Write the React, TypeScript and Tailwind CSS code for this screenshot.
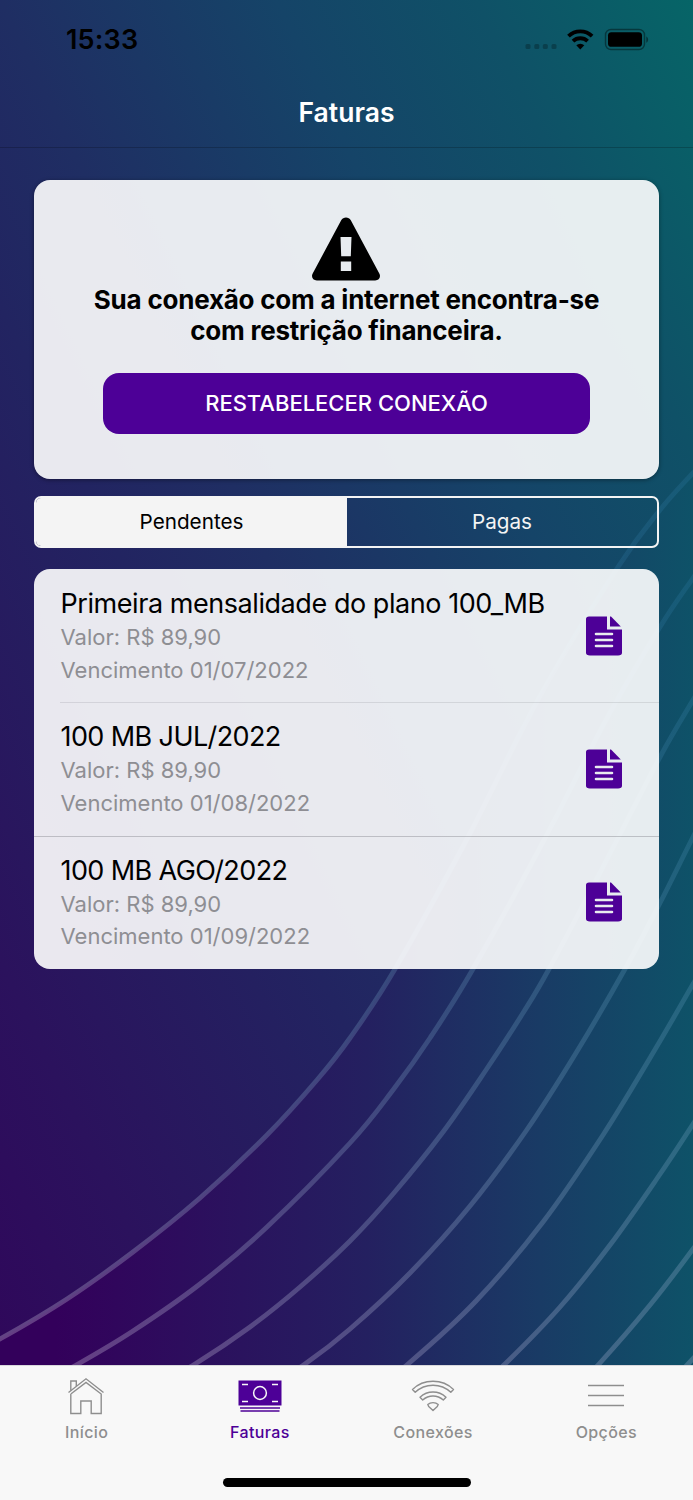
import type { ReactNode } from "react";

type Point = [number, number];

interface Invoice {
  id: number;
  title: string;
  amount: string;
  dueDate: string;
}

const invoices: Invoice[] = [
  { id: 1, title: "Primeira mensalidade do plano 100_MB", amount: "89,90", dueDate: "01/07/2022" },
  { id: 2, title: "100 MB JUL/2022", amount: "89,90", dueDate: "01/08/2022" },
  { id: 3, title: "100 MB AGO/2022", amount: "89,90", dueDate: "01/09/2022" },
];

const waves: Point[][] = [
  [[-60, 1370], [0, 1339], [67, 1299], [133, 1252], [200, 1198], [267, 1135], [317, 1080], [350, 1038], [395, 969], [468, 837], [540, 696], [618, 567], [660, 510], [693, 473], [720, 445]],
  [[20, 1395], [78, 1364], [133, 1331], [200, 1284], [267, 1227], [350, 1143], [393, 1090], [430, 1038], [473, 969], [543, 842], [606, 720], [660, 627], [693, 578], [720, 540]],
  [[140, 1395], [195, 1364], [250, 1327], [300, 1287], [350, 1241], [393, 1194], [443, 1132], [486, 1070], [523, 1013], [549, 969], [603, 867], [660, 757], [693, 700], [720, 655]],
  [[260, 1392], [305, 1364], [350, 1329], [410, 1273], [470, 1206], [526, 1131], [576, 1053], [625, 969], [660, 903], [693, 837], [720, 785]],
  [[370, 1392], [408, 1364], [476, 1301], [543, 1222], [603, 1135], [650, 1058], [693, 984], [720, 935]],
  [[470, 1395], [505, 1364], [560, 1307], [610, 1245], [656, 1180], [693, 1124], [720, 1080]],
  [[570, 1393], [599, 1364], [650, 1305], [693, 1249], [720, 1210]],
  [[660, 1392], [689, 1363], [720, 1328]],
];

// Catmull-Rom points to a cubic bezier path
const smoothPath = (pts: Point[]) => {
  let d = `M${pts[0][0]} ${pts[0][1]}`;
  for (let i = 0; i < pts.length - 1; i++) {
    const p0 = pts[i - 1] ?? pts[i];
    const p1 = pts[i];
    const p2 = pts[i + 1];
    const p3 = pts[i + 2] ?? p2;
    d += `C${p1[0] + (p2[0] - p0[0]) / 6} ${p1[1] + (p2[1] - p0[1]) / 6} ${p2[0] - (p3[0] - p1[0]) / 6} ${p2[1] - (p3[1] - p1[1]) / 6} ${p2[0]} ${p2[1]}`;
  }
  return d;
};

const Background = () => (
  <svg className="absolute inset-0" width="693" height="1365" viewBox="0 0 693 1365">
    <defs>
      <linearGradient id="sky" gradientUnits="userSpaceOnUse" x1="0" y1="1339" x2="1086" y2="820">
        <stop offset="0" stopColor="#2f085b" />
        <stop offset="0.136" stopColor="#2b125d" />
        <stop offset="0.37" stopColor="#222461" />
        <stop offset="0.48" stopColor="#1f2e63" />
        <stop offset="0.687" stopColor="#154468" />
        <stop offset="0.837" stopColor="#0f5167" />
        <stop offset="1" stopColor="#066567" />
      </linearGradient>
      <linearGradient id="ground" gradientUnits="userSpaceOnUse" x1="0" y1="0" x2="693" y2="0">
        <stop offset="0.08" stopColor="#33005b" />
        <stop offset="0.53" stopColor="#242060" />
        <stop offset="0.78" stopColor="#193b65" />
        <stop offset="1" stopColor="#0e5268" />
      </linearGradient>
      <linearGradient id="wave" gradientUnits="userSpaceOnUse" x1="0" y1="1365" x2="300" y2="480">
        <stop offset="0" stopColor="#c4b0d0" stopOpacity="0.36" />
        <stop offset="0.5" stopColor="#7fb0cf" stopOpacity="0.25" />
        <stop offset="1" stopColor="#3d8fc0" stopOpacity="0.18" />
      </linearGradient>
    </defs>
    <rect width="693" height="1365" fill="url(#sky)" />
    <path d={`${smoothPath(waves[0])}V1400H-60Z`} fill="url(#ground)" />
    {waves.map((pts, i) => (
      <path key={i} d={smoothPath(pts)} fill="none" stroke="url(#wave)" strokeWidth="4.8" />
    ))}
  </svg>
);

const StatusBar = () => (
  <div className="flex h-[80px] items-center justify-between pl-[66px] pr-[44px]">
    <span className="text-[27px] font-semibold tracking-[0.2px] text-black">15:33</span>
    <svg width="124" height="24" viewBox="0 0 124 24">
      <g fill="#000" fillOpacity="0.25">
        <rect x="0.5" y="16" width="5" height="5" rx="1.5" />
        <rect x="9.3" y="16" width="5" height="5" rx="1.5" />
        <rect x="17.8" y="16" width="5" height="5" rx="1.5" />
        <rect x="26.5" y="16" width="5" height="5" rx="1.5" />
      </g>
      <g fill="none" stroke="#000" strokeWidth="3.8">
        <path d="M43.500 8.200a16.600 16.600 0 0 1 23.600 0" />
        <path d="M48 13.200a10.500 10.500 0 0 1 14.600 0" />
      </g>
      <path d="M51.300 17.300a6 6 0 0 1 8 0l-4 4.300z" />
      <rect x="80.500" y="1.500" width="39" height="20" rx="5.500" fill="none" stroke="#000" strokeOpacity="0.4" strokeWidth="1.400" />
      <rect x="83" y="4.200" width="34" height="14.600" rx="3.400" />
      <path d="M121.300 8.500c2.400 1 2.400 5.200 0 6.200z" fillOpacity="0.45" />
    </svg>
  </div>
);

const WarningIcon = () => (
  <svg className="-ml-px" width="70" height="64" viewBox="0 0 70 64">
    <path
      fillRule="evenodd"
      d="M30.2 3.2C32.300-.3 37.700-.3 39.800 3.200L68.300 56.500C70.200 60 68 63.500 64.200 63.500H5.800C2 63.500-.2 60 1.700 56.500ZM29.500 20L30.200 39.300H39.800L40.500 20ZM29.800 44.500V54H40.200V44.500Z"
    />
  </svg>
);

const DocumentIcon = () => (
  <svg width="38" height="40" viewBox="0 0 38 40" fill="#4d0097">
    <path d="M4 .4H22V13.500H37V36.800Q37 39.500 33 39.600H5Q1 39.500 1 36.800V3Q1 .6 4 .4Z" />
    <path d="M25 .4H26L35.800 10.500H25Z" />
    <path d="M11 18H27M11 24H27M11 30H27" stroke="#e9ebef" strokeWidth="2.600" strokeLinecap="round" />
  </svg>
);

const HomeIcon = () => (
  <svg className="-ml-px" width="38" height="38" viewBox="0 0 38 38" fill="none" stroke="#8e8e8e" strokeWidth="1.400">
    <path d="M1.500 15.500L19 1.800L36.500 15.500M3.800 17V36.500H13.800V24H24.200V36.500H34.200V17L19 5.500L3.800 17" />
    <path d="M3.800 13.500V4H9.300V9" />
  </svg>
);

const MoneyIcon = () => (
  <svg width="44" height="38" viewBox="0 0 44 38">
    <rect x="0.500" y="3.500" width="43" height="25" fill="#4d0097" />
    <path d="M2 31H42M2.500 34H41.500" stroke="#4d0097" strokeWidth="1.500" />
    <path d="M4 7.500H10M34 7.500H40M4 24.500H10M34 24.500H40" stroke="#f8f8f8" strokeWidth="1.500" />
    <circle cx="22" cy="16" r="6.400" fill="none" stroke="#f8f8f8" strokeWidth="1.500" />
  </svg>
);

const WifiIcon = () => (
  <svg width="44" height="38" viewBox="0 0 44 38" fill="none" stroke="#8e8e8e" strokeWidth="1.400" strokeLinejoin="round">
    <path d="M1.500 12.500C12.500 1.500 31.500 1.500 42.500 12.500L39.800 15.300C30 5.800 14 5.800 4.200 15.300Z" />
    <path d="M9 20.200C16.500 13.300 27.500 13.300 35 20.200L32.300 22.900C26.300 17.600 17.700 17.600 11.700 22.900Z" />
    <path d="M16.800 27.500C19.500 25 24.500 25 27.200 27.500L26.300 29.500L22 33.500L17.700 29.500Z" />
  </svg>
);

const MenuIcon = () => (
  <svg className="-ml-px" width="38" height="38" viewBox="0 0 38 38" stroke="#8e8e8e" strokeWidth="1.400">
    <path d="M1 8.500H37M1 18.500H37M1 28.500H37" />
  </svg>
);

interface TabProps {
  label: string;
  icon: ReactNode;
  active?: boolean;
}

const Tab = ({ label, icon, active }: TabProps) => (
  <button className={`flex flex-1 flex-col items-center text-[16px] font-medium leading-6 tracking-[0.4px] ${active ? "text-[#4d0097]" : "text-[#8e8e8e]"}`}>
    {icon}
    <span className="mt-[5px]">{label}</span>
  </button>
);

const InvoiceRow = ({ invoice, last }: { invoice: Invoice; last: boolean }) => (
  <li className="relative flex h-[133.3px] items-center justify-between pl-[26.500px] pr-[36px]">
    <div className="whitespace-nowrap text-[22px] leading-[32.500px] text-[#8e8e93]">
      <h3 className={`relative top-px text-[27px] leading-[36px] text-black ${invoice.title.length > 20 ? "tracking-[-0.440px]" : "tracking-[-0.600px]"}`}>
        {invoice.title}
      </h3>
      <p>Valor: R$ {invoice.amount}</p>
      <p>Vencimento {invoice.dueDate}</p>
    </div>
    <DocumentIcon />
    {!last && (
      <span className={`absolute -bottom-px right-0 h-px ${invoice.id === 2 ? "left-0 bg-[#3c3c43]/25" : "left-[26px] bg-[#3c3c43]/12"}`} />
    )}
  </li>
);

export default function App() {
  return (
    <div className="relative flex h-[1500px] w-[693px] flex-col overflow-hidden bg-[#f8f8f8] font-['Inter','Liberation_Sans',sans-serif]">
      <Background />

      <header className="relative h-[148px] border-b border-black/20">
        <StatusBar />
        <h1 className="mt-[12px] text-center text-[26.500px] font-semibold leading-10 text-white">Faturas</h1>
      </header>

      <main className="relative flex flex-1 flex-col px-[34px] pt-8">
        <section className="flex h-[299px] flex-col items-center rounded-[16px] bg-white/90 pt-[37px] shadow-[0_1px_4px_rgba(0,0,0,0.4)]">
          <WarningIcon />
          <p className="mt-[3px] whitespace-nowrap text-center text-[26px] font-bold leading-[31px] tracking-[-0.220px] text-black">
            Sua conexão com a internet encontra-se
            <br />
            com restrição financeira.
          </p>
          <button className="mt-[27px] h-[61px] w-[487px] rounded-[16px] bg-[#4d0097] text-[22px] font-medium text-white">
            RESTABELECER CONEXÃO
          </button>
        </section>

        <div className="mt-[17px] flex h-[52px] overflow-hidden rounded-[7px] border-2 border-[#f4f4f4] text-[20.700px]">
          <button className="w-[311px] bg-[#f4f4f4] pb-px text-black">Pendentes</button>
          <button className="flex-1 pb-px text-[#f4f4f4]">Pagas</button>
        </div>

        <ul className="mt-[21px] overflow-hidden rounded-[16px] bg-white/90">
          {invoices.map((invoice, i) => (
            <InvoiceRow key={invoice.id} invoice={invoice} last={i === invoices.length - 1} />
          ))}
        </ul>
      </main>

      <footer className="relative flex h-[135px] flex-col items-center border-t border-[#d8d8dc] bg-[#f8f8f8] pt-[11px]">
        <nav className="flex w-full">
          <Tab label="Início" icon={<HomeIcon />} />
          <Tab label="Faturas" icon={<MoneyIcon />} active />
          <Tab label="Conexões" icon={<WifiIcon />} />
          <Tab label="Opções" icon={<MenuIcon />} />
        </nav>
        <div className="mt-[34px] h-[9px] w-[248px] rounded-full bg-black" />
      </footer>
    </div>
  );
}
